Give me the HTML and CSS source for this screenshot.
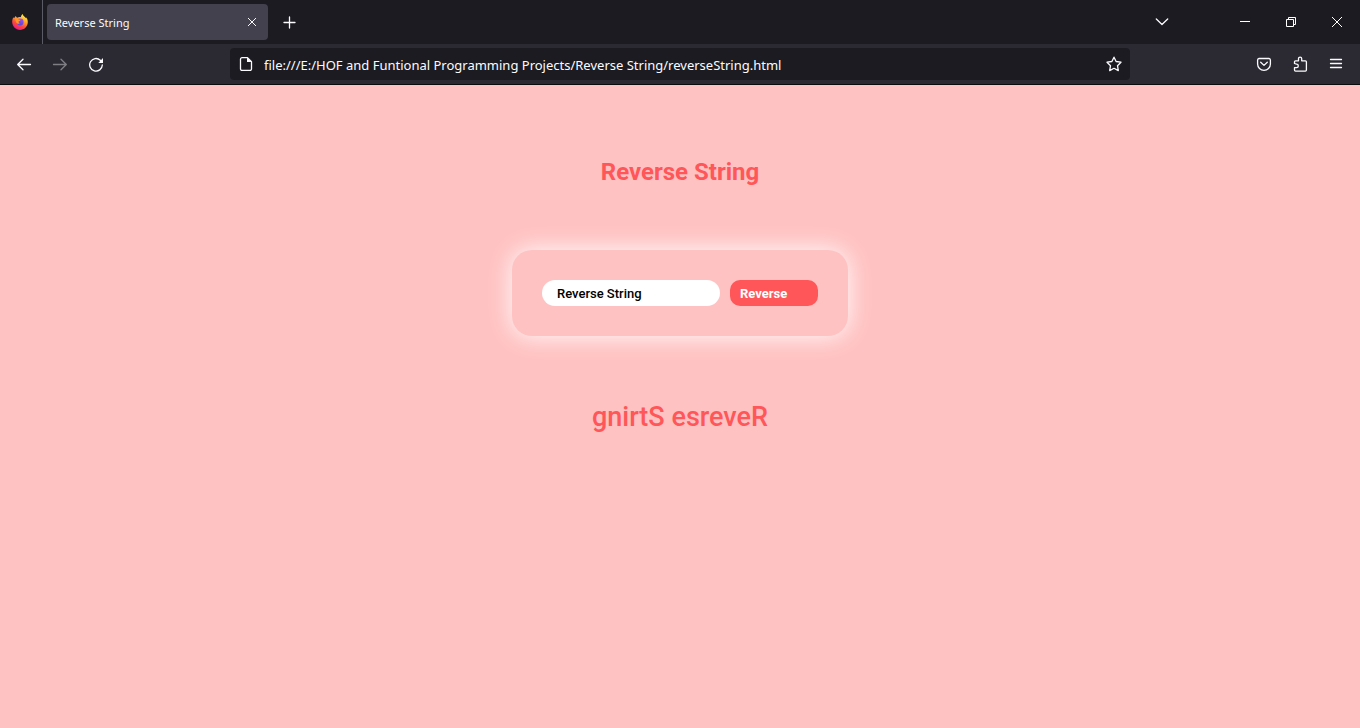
FILE: index.html
```html
<!DOCTYPE html>
<html lang="en">
<head>
<meta charset="utf-8">
<meta name="viewport" content="width=device-width, initial-scale=1">
<title>Reverse String</title>
<link rel="stylesheet" href="styles.css">
</head>
<body>
<header class="browser">
  <div class="tabbar">
    <button class="view" aria-label="Firefox View">
      <svg width="16" height="16" viewBox="0 0 16 16">
        <defs>
          <linearGradient id="flame" x1="0.8" y1="0.05" x2="0.3" y2="1">
            <stop offset="0" stop-color="#fff44f"/>
            <stop offset="0.35" stop-color="#ffa52b"/>
            <stop offset="0.65" stop-color="#ff4a3a"/>
            <stop offset="1" stop-color="#e8178a"/>
          </linearGradient>
          <linearGradient id="globe" x1="0" y1="0" x2="0" y2="1">
            <stop offset="0" stop-color="#a050f5"/>
            <stop offset="1" stop-color="#5a45d8"/>
          </linearGradient>
        </defs>
        <path fill="url(#flame)" d="M10.600 0c-1.100.9-1.600 2-1.700 3.200C7.500 3 6.300 3.200 5.200 3.700 4.400 3.300 4 2.700 3.900 2 3 2.600 2.500 3.400 2.400 4.100L1.300 3.600C.5 5 .1 6.500.2 8.300.4 12.600 3.800 15.900 8 15.900s7.700-3.400 7.800-7.700c0-2-.5-3.700-1.600-4.900.1.700.1 1 .1 1.300C13.300 2.700 11.200 2.300 10.600 0z"/>
        <circle cx="8.200" cy="8" r="3.400" fill="url(#globe)"/>
        <path fill="#ff9627" d="M2.600 4.500c1.700-.7 3.200 0 4 .9.900.2 1.600.2 1.800.5-.1.800-1.500 1-1.800 1.600-.3.900.4 1.500 1.300 1.600-1 1-3 .6-3.600-.7C3.500 7 3.800 6 2.600 4.500z"/>
      </svg>
    </button>
    <div class="tab">
      <span class="tab-title">Reverse String</span>
      <button aria-label="Close tab"><svg width="16" height="16" viewBox="0 0 16 16"><path class="line" d="M4.300 4.300l7.400 7.400M11.700 4.300l-7.400 7.400"/></svg></button>
    </div>
    <button class="new-tab" aria-label="New tab"><svg width="16" height="16" viewBox="0 0 16 16"><path class="line bright" d="M7.500 3v11M2 8.500h11"/></svg></button>
    <button class="all-tabs" aria-label="List all tabs"><svg width="16" height="16" viewBox="0 0 16 16"><path class="line bright" d="M2.300 5l5.700 5.500L13.700 5"/></svg></button>
    <div class="window-buttons">
      <button aria-label="Minimize"><svg width="12" height="12" viewBox="0 0 12 12"><path class="pixel" d="M1 5.500h10"/></svg></button>
      <button aria-label="Restore"><svg width="12" height="12" viewBox="0 0 12 12"><path class="pixel" d="M1.500 3.500h7v7h-7zM3.500 3V1.500h7v7H9"/></svg></button>
      <button aria-label="Close"><svg width="12" height="12" viewBox="0 0 12 12"><path class="pixel" d="M1 1l10 10M11 1L1 11"/></svg></button>
    </div>
  </div>
  <div class="toolbar">
    <nav class="tools" aria-label="History">
      <button aria-label="Back"><svg width="16" height="16" viewBox="0 0 16 16"><path class="icon" d="M14.500 8.500H1.800M7 3.200L1.700 8.500 7 13.800"/></svg></button>
      <button aria-label="Forward" disabled><svg width="16" height="16" viewBox="0 0 16 16"><path class="icon" d="M1.500 8.500h12.700M9 3.200l5.300 5.300L9 13.800"/></svg></button>
      <button aria-label="Reload"><svg width="16" height="16" viewBox="0 0 16 16"><path class="icon" d="M14.300 9A6.300 6.300 0 1 1 12.300 4.200L14 6"/><path class="solid" d="M15 2v5h-4.700z"/></svg></button>
    </nav>
    <div class="address">
      <svg width="16" height="16" viewBox="0 0 16 16"><path class="icon" d="M4 1.700h5.500l4 4v7.200a1.500 1.500 0 0 1-1.500 1.500H4a1.500 1.500 0 0 1-1.500-1.500V3.200A1.500 1.500 0 0 1 4 1.700z"/><path class="solid" d="M9 1.500V6h4.700z"/></svg>
      <input type="text" aria-label="Address" value="file:///E:/HOF and Funtional Programming Projects/Reverse String/reverseString.html">
      <button aria-label="Bookmark this page"><svg width="16" height="16" viewBox="0 0 16 16"><path class="icon" d="M8 1.200l2.100 4.300 4.900.7-3.500 3.500.8 4.900L8 12.300l-4.300 2.300.8-4.900L1 6.200l4.900-.7z"/></svg></button>
    </div>
    <div class="tools end">
      <button aria-label="Save to Pocket"><svg width="16" height="16" viewBox="0 0 16 16"><path class="icon" d="M3 2.500h10A1.600 1.600 0 0 1 14.400 4v3.900a6.400 6.400 0 0 1-12.800 0V4A1.600 1.600 0 0 1 3 2.500z"/><path class="icon" d="M4.700 6.200L8 9.400l3.300-3.200"/></svg></button>
      <button aria-label="Extensions"><svg width="16" height="16" viewBox="0 0 16 16"><path class="icon" d="M2.500 7.500V5.800a1 1 0 0 1 1-1h3V2.700a1.600 1.600 0 0 1 3.200 0v2.100h3.700a1 1 0 0 1 1 1v8.300a1 1 0 0 1-1 1H3.500a1 1 0 0 1-1-1v-2.500h2.100a1.700 1.700 0 0 0 0-3.400z"/></svg></button>
      <button aria-label="Menu"><svg width="16" height="16" viewBox="0 0 16 16"><path class="icon" d="M2.500 3.500h11M2.500 7.500h11M2.500 11.500h11"/></svg></button>
    </div>
  </div>
</header>
<main class="page">
  <h1>Reverse String</h1>
  <form class="card">
    <input class="source" type="text" aria-label="Text to reverse" value="Reverse String">
    <button class="submit" type="button">Reverse</button>
  </form>
  <output class="result">gnirtS esreveR</output>
</main>
</body>
</html>
```
FILE: styles.css
```css
* {
  box-sizing: border-box;
}

body {
  display: flex;
  flex-direction: column;
  min-height: 100vh;
  margin: 0;
  background: #ffc2c2;
  font-family: Roboto, sans-serif;
}

button,
input {
  margin: 0;
  padding: 0;
  border: 0;
  outline: 0;
  font: inherit;
  color: inherit;
}

svg {
  display: block;
  flex: none;
}

.line,
.icon,
.pixel {
  fill: none;
  stroke: #fbfbfe;
  stroke-linecap: round;
  stroke-linejoin: round;
}

.line {
  stroke-width: 1;
}

.bright {
  stroke-width: 1.3;
}

.icon {
  stroke-width: 1.3;
}

.pixel {
  stroke: #fff;
  stroke-linecap: butt;
  stroke-linejoin: miter;
}

.solid {
  fill: #fbfbfe;
}

.browser {
  border-bottom: 1px solid #0c0c0d;
  background: #2b2a33;
  color: #fbfbfe;
  font-family: "Noto Sans", sans-serif;
}

.browser button {
  display: grid;
  place-items: center;
  background: none;
}

.tabbar {
  display: flex;
  align-items: center;
  height: 44px;
  background: #1c1b22;
}

.view {
  align-self: stretch;
  width: 43px;
  padding-right: 2px;
  border-right: 1px solid #5b5b66;
}

.tab {
  display: flex;
  align-items: center;
  justify-content: space-between;
  width: 221px;
  height: 36px;
  margin-left: 4px;
  padding: 0 8px;
  border-radius: 4px;
  background: #42414d;
  font-size: 11px;
}

.tab-title {
  padding-top: 1px;
}

.new-tab {
  width: 36px;
  height: 36px;
  margin-left: 4px;
}

.all-tabs {
  width: 36px;
  height: 36px;
  margin-left: auto;
  margin-right: 42px;
}

.window-buttons {
  display: flex;
  height: 100%;
}

.window-buttons button {
  width: 46px;
}

.toolbar {
  display: grid;
  grid-template-columns: 1fr minmax(0, 900px) 1fr;
  align-items: center;
  height: 40px;
}

.tools {
  display: flex;
  padding: 0 6px;
}

.tools button {
  width: 36px;
  height: 36px;
}

.tools button:disabled {
  opacity: 0.4;
}

.end {
  justify-content: flex-end;
}

.address {
  display: flex;
  align-items: center;
  gap: 10px;
  height: 32px;
  padding: 0 8px;
  border-radius: 4px;
  background: #1c1b22;
}

.address input {
  flex: 1;
  min-width: 0;
  padding-top: 2px;
  background: none;
  font-size: 13px;
}

.page {
  display: flex;
  flex: 1;
  flex-direction: column;
  align-items: center;
  padding-top: 73px;
  color: #ff5759;
}

h1 {
  margin: 0 0 64px;
  font-size: 24px;
  line-height: 28px;
}

.card {
  display: flex;
  gap: 10px;
  padding: 30px;
  border-radius: 20px;
  box-shadow: 0 0 25px #fff;
}

.source,
.submit {
  height: 26px;
  font-size: 13px;
}

.source {
  width: 178px;
  padding: 0 15px;
  border-radius: 13px;
  background: #fff;
  color: #000;
  font-weight: 500;
}

.submit {
  width: 88px;
  padding: 0 10px;
  border-radius: 10px;
  background: #ff5759;
  color: #fff;
  font-weight: 700;
  text-align: left;
}

.result {
  margin-top: 65px;
  font-size: 27px;
  font-weight: 500;
  line-height: 32px;
}
```
